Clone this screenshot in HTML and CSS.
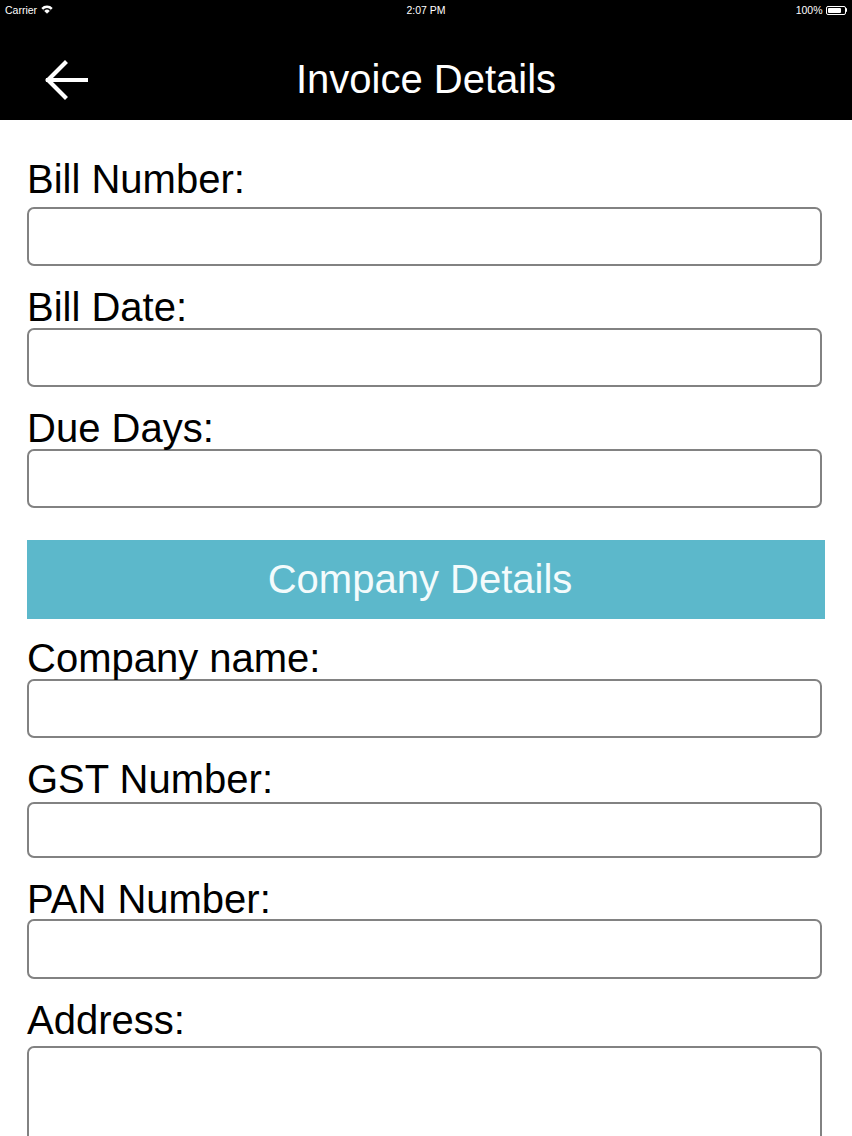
FILE: index.html
```html
<!DOCTYPE html>
<html lang="en">
<head>
<meta charset="utf-8">
<title>Invoice Details</title>
<link rel="stylesheet" href="styles.css">
</head>
<body>
<div class="screen">
  <header class="appbar">
    <div class="status">
      <div class="status-left">
        <span>Carrier</span>
        <svg class="wifi" width="12" height="9" viewBox="0 0 12 9" aria-hidden="true">
          <path d="M6 8.6 L0.3 2.9 A8 8 0 0 1 11.7 2.9 Z" fill="#fff"/>
          <path d="M6 8.6 L2.1 4.7 A5.5 5.5 0 0 1 9.9 4.7 Z" fill="#000"/>
          <path d="M6 8.6 L3.3 5.9 A3.8 3.8 0 0 1 8.7 5.9 Z" fill="#fff"/>
        </svg>
      </div>
      <div class="status-time">2:07 PM</div>
      <div class="status-right">
        <span>100%</span>
        <span class="battery"><span class="battery-fill"></span></span>
        <span class="battery-nub"></span>
      </div>
    </div>
    <div class="nav">
      <button class="back" type="button" aria-label="Back">
        <svg width="44" height="42" viewBox="0 0 44 42" aria-hidden="true">
          <path d="M4 21 H42 M21 4 L4 21 L21 38" fill="none" stroke="#fff" stroke-width="4.2" stroke-linecap="square" stroke-linejoin="miter"/>
        </svg>
      </button>
      <h1 class="title">Invoice Details</h1>
      <span class="nav-spacer"></span>
    </div>
  </header>

  <main class="form">
    <div class="field field-first">
      <label class="label">Bill Number:</label>
      <input class="input" type="text">
    </div>
    <div class="field">
      <label class="label">Bill Date:</label>
      <input class="input" type="text">
    </div>
    <div class="field">
      <label class="label">Due Days:</label>
      <input class="input" type="text">
    </div>

    <div class="section-band">Company Details</div>

    <div class="field">
      <label class="label">Company name:</label>
      <input class="input" type="text">
    </div>
    <div class="field field-gst">
      <label class="label">GST Number:</label>
      <input class="input" type="text">
    </div>
    <div class="field field-pan">
      <label class="label">PAN Number:</label>
      <input class="input" type="text">
    </div>
    <div class="field field-address">
      <label class="label">Address:</label>
      <textarea class="input input-area"></textarea>
    </div>
  </main>
</div>
</body>
</html>
```

FILE: styles.css
```css
* {
  box-sizing: border-box;
}

html, body {
  margin: 0;
  padding: 0;
  background: #fff;
  overflow: hidden;
}

body {
  font-family: "Liberation Sans", Arial, Helvetica, sans-serif;
  color: #000;
}

.screen {
  width: 852px;
  height: 1136px;
  overflow: hidden;
  background: #fff;
}

/* ---------- header ---------- */
.appbar {
  background: #000;
  color: #fff;
  height: 120px;
}

.status {
  height: 20px;
  display: grid;
  grid-template-columns: 1fr auto 1fr;
  align-items: center;
  padding: 0 5px 0 5px;
  font-size: 10.5px;
  line-height: 20px;
  color: #fff;
}

.status-left {
  display: flex;
  align-items: center;
  gap: 4px;
}

.wifi {
  display: block;
  margin-top: -1px;
}

.status-time {
  text-align: center;
}

.status-right {
  display: flex;
  align-items: center;
  justify-content: flex-end;
}

.status-right span:first-child {
  margin-right: 3px;
}

.battery {
  width: 20px;
  height: 9px;
  border: 1px solid #fff;
  border-radius: 2px;
  padding: 1px;
  display: flex;
}

.battery-fill {
  flex: 1;
  background: #fff;
  border-radius: 1px;
}

.battery-nub {
  width: 1.5px;
  height: 4px;
  background: #fff;
  border-radius: 0 1px 1px 0;
}

.nav {
  height: 100px;
  display: grid;
  grid-template-columns: 1fr auto 1fr;
  align-items: center;
}

.back {
  justify-self: start;
  background: none;
  border: 0;
  padding: 0;
  margin: 20px 0 0 44px;
  display: block;
  cursor: pointer;
}

.back svg {
  display: block;
}

.title {
  margin: 0;
  padding-top: 18px;
  font-size: 40px;
  font-weight: normal;
  line-height: 82px;
  height: 100px;
  color: #fff;
  white-space: nowrap;
}

/* ---------- form ---------- */
.form {
  padding: 39px 0 0 27px;
  display: flex;
  flex-direction: column;
  align-items: flex-start;
}

.field {
  width: 795px;
  margin-bottom: 21px;
}

.label {
  display: block;
  font-size: 40px;
  line-height: 40px;
  color: #000;
  white-space: nowrap;
}

.field-first .label {
  margin-bottom: 8px;
}

.input {
  display: block;
  width: 795px;
  height: 59px;
  margin: 1px 0 0 0;
  border: 2px solid #828282;
  border-radius: 7px;
  background: #fff;
  font: inherit;
  padding: 0 10px;
  outline: none;
}

.field-gst .input {
  margin-top: 3px;
  height: 56px;
}

.field-pan .input {
  margin-top: 0;
  height: 60px;
}

.field-address .input {
  margin-top: 6px;
}

.input-area {
  height: 140px;
  resize: none;
}

.section-band {
  width: 798px;
  height: 79px;
  margin: 11px 0 19px 0;
  background: #5cb8cb;
  color: #f3fbfc;
  font-size: 40px;
  line-height: 79px;
  text-align: center;
  padding-right: 12px;
  white-space: nowrap;
}
```
